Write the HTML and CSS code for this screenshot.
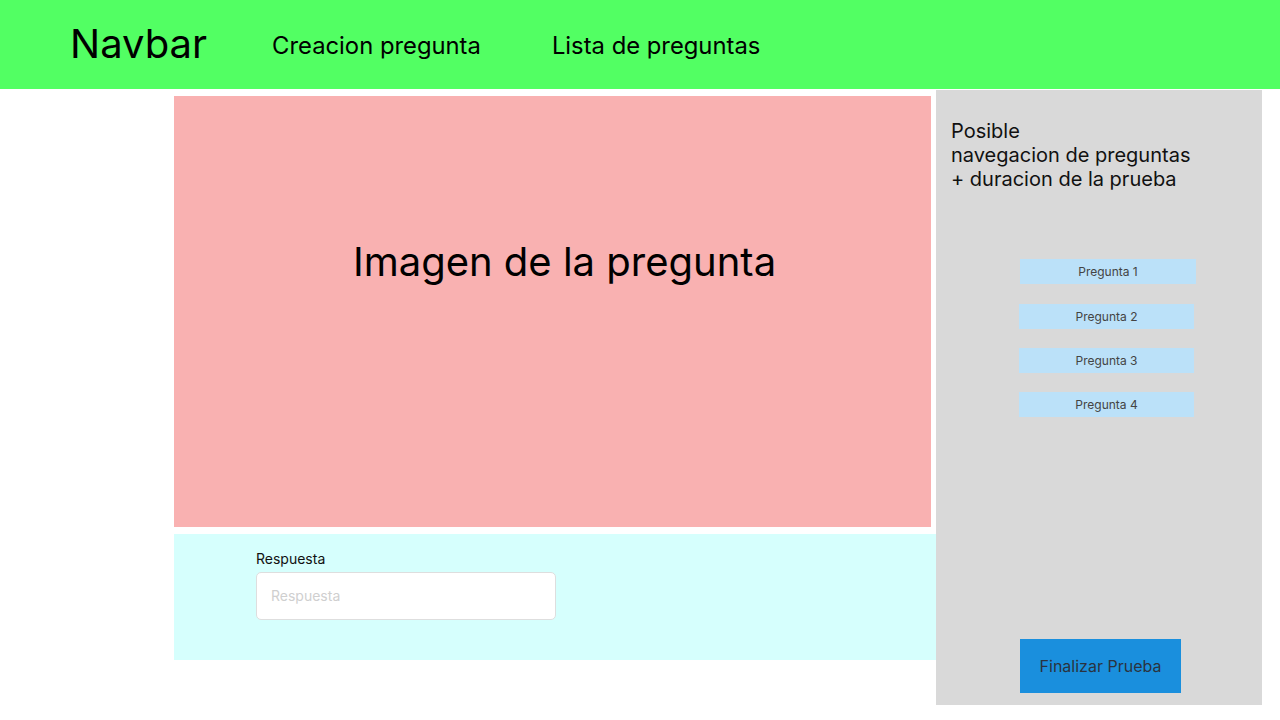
FILE: index.html
```html
<!DOCTYPE html>
<html lang="es">
<head>
<meta charset="utf-8">
<title>Prueba</title>
<link rel="stylesheet" href="styles.css">
</head>
<body>
<header class="navbar">
  <div class="brand">Navbar</div>
  <nav class="links">
    <a class="link">Creacion pregunta</a>
    <a class="link">Lista de preguntas</a>
  </nav>
</header>
<div class="content">
  <div class="spacer"></div>
  <main class="main">
    <section class="image">
      <span class="image-text">Imagen de la pregunta</span>
    </section>
    <section class="answer">
      <label class="answer-label" for="resp">Respuesta</label>
      <input class="answer-input" id="resp" type="text" placeholder="Respuesta">
    </section>
  </main>
  <aside class="sidebar">
    <p class="sidebar-text">Posible<br>navegacion de preguntas<br>+ duracion de la prueba</p>
    <div class="questions">
      <button class="q q-first">Pregunta 1</button>
      <button class="q q-second">Pregunta 2</button>
      <button class="q">Pregunta 3</button>
      <button class="q">Pregunta 4</button>
    </div>
    <div class="finish-wrap">
      <button class="finish">Finalizar Prueba</button>
    </div>
  </aside>
</div>
</body>
</html>
```
FILE: styles.css
```css
* { box-sizing: border-box; }
html, body { margin: 0; padding: 0; }
body {
  font-family: Inter, "Noto Sans", sans-serif;
  background: #ffffff;
  color: #000;
  width: 1280px;
  height: 720px;
  overflow: hidden;
}
.navbar {
  height: 89px;
  background: #52ff63;
  display: flex;
  align-items: center;
  padding-left: 70px;
  padding-top: 1px;
}
.brand {
  font-size: 40px;
  line-height: 1;
  margin-right: 65px;
  padding-bottom: 2px;
}
.links { display: flex; gap: 71px; }
.link {
  font-size: 23.8px;
  color: #000;
  text-decoration: none;
}
.content {
  display: flex;
  margin-top: 1px;
}
.spacer { width: 174px; flex: none; }
.main {
  width: 762px;
  flex: none;
  display: flex;
  flex-direction: column;
}
.image {
  margin-top: 6px;
  width: 757px;
  height: 431px;
  background: #f9b1b1;
  display: flex;
  justify-content: center;
  padding-left: 24px;
  padding-top: 138px;
}
.image-text {
  font-size: 40px;
  line-height: 56px;
  height: 56px;
}
.answer {
  margin-top: 7px;
  height: 126px;
  background: #d6fffd;
  padding: 16px 0 0 82px;
  display: flex;
  flex-direction: column;
}
.answer-label {
  font-size: 14px;
  line-height: 18px;
  margin-bottom: 4px;
  color: #111;
}
.answer-input {
  width: 300px;
  height: 48px;
  border: 1px solid #dedede;
  border-radius: 5px;
  background: #fff;
  padding: 0 14px 2px;
  font-family: Inter, sans-serif;
  font-size: 14px;
  outline: none;
}
.answer-input::placeholder { color: #cfcfcf; }
.sidebar {
  width: 326px;
  height: 615px;
  flex: none;
  background: #d9d9d9;
  padding: 29px 0 12px 15px;
  display: flex;
  flex-direction: column;
}
.sidebar-text {
  margin: 0;
  font-size: 20px;
  line-height: 24px;
  color: #111;
}
.questions {
  margin-top: 68px;
  padding-left: 68px;
  display: flex;
  flex-direction: column;
  gap: 19px;
}
.q {
  width: 175px;
  height: 25px;
  border: none;
  background: #bbe1f9;
  font-family: Inter, sans-serif;
  font-size: 12px;
  color: #444;
  padding: 0;
}
.q-first { width: 176px; margin-left: 1px; }
.q-second { margin-top: 1px; }
.finish-wrap {
  margin-top: auto;
  padding-left: 69px;
}
.finish {
  width: 161px;
  height: 54px;
  border: none;
  background: #1a8fdd;
  font-family: Inter, sans-serif;
  font-size: 16px;
  color: #2a3340;
  padding: 0;
}
```
